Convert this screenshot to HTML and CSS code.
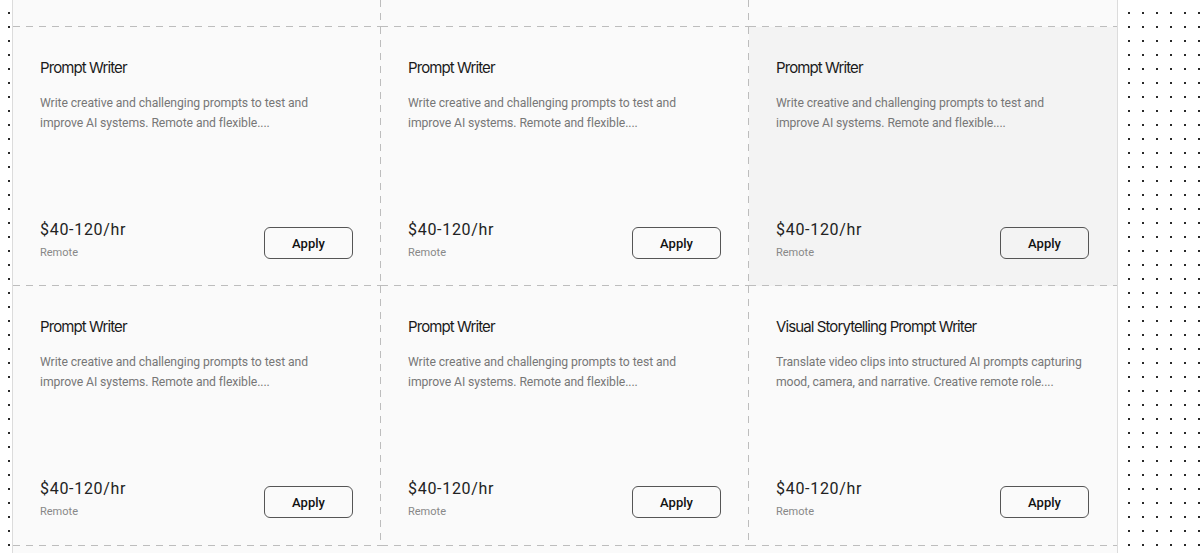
FILE: index.html
```html
<!DOCTYPE html>
<html lang="en">
<head>
<meta charset="utf-8">
<title>Jobs</title>
<link rel="stylesheet" href="styles.css">
</head>
<body>
<div class="board">
  <div class="grid stub">
    <div class="cell"></div>
    <div class="cell"></div>
    <div class="cell"></div>
  </div>
  <div class="grid">
    <div class="cell card">
      <h3 class="title">Prompt Writer</h3>
      <p class="desc">Write creative and challenging prompts to test and improve AI systems. Remote and flexible....</p>
      <div class="foot">
        <div class="meta"><div class="price">$40-120/hr</div><div class="loc">Remote</div></div>
        <button class="apply">Apply</button>
      </div>
    </div>
    <div class="cell card">
      <h3 class="title">Prompt Writer</h3>
      <p class="desc">Write creative and challenging prompts to test and improve AI systems. Remote and flexible....</p>
      <div class="foot">
        <div class="meta"><div class="price">$40-120/hr</div><div class="loc">Remote</div></div>
        <button class="apply">Apply</button>
      </div>
    </div>
    <div class="cell card hovered">
      <h3 class="title">Prompt Writer</h3>
      <p class="desc">Write creative and challenging prompts to test and improve AI systems. Remote and flexible....</p>
      <div class="foot">
        <div class="meta"><div class="price">$40-120/hr</div><div class="loc">Remote</div></div>
        <button class="apply">Apply</button>
      </div>
    </div>
    <div class="cell card">
      <h3 class="title">Prompt Writer</h3>
      <p class="desc">Write creative and challenging prompts to test and improve AI systems. Remote and flexible....</p>
      <div class="foot">
        <div class="meta"><div class="price">$40-120/hr</div><div class="loc">Remote</div></div>
        <button class="apply">Apply</button>
      </div>
    </div>
    <div class="cell card">
      <h3 class="title">Prompt Writer</h3>
      <p class="desc">Write creative and challenging prompts to test and improve AI systems. Remote and flexible....</p>
      <div class="foot">
        <div class="meta"><div class="price">$40-120/hr</div><div class="loc">Remote</div></div>
        <button class="apply">Apply</button>
      </div>
    </div>
    <div class="cell card">
      <h3 class="title">Visual Storytelling Prompt Writer</h3>
      <p class="desc">Translate video clips into structured AI prompts capturing mood, camera, and narrative. Creative remote role....</p>
      <div class="foot">
        <div class="meta"><div class="price">$40-120/hr</div><div class="loc">Remote</div></div>
        <button class="apply">Apply</button>
      </div>
    </div>
  </div>
</div>
</body>
</html>
```

FILE: styles.css
```css
html, body {
  margin: 0;
  padding: 0;
}
body {
  width: 1200px;
  height: 553px;
  overflow: hidden;
  background-color: #ffffff;
  background-image: radial-gradient(circle at 7px 7px, #2a2a2a 0.9px, transparent 1.3px);
  background-size: 14px 14px;
  background-position: 2px 6px;
  font-family: Roboto, "Liberation Sans", sans-serif;
}
.board {
  margin-left: 12px;
  width: 1104px;
  height: 553px;
  border-left: 1px solid #dcdcdc;
  border-right: 1px solid #dcdcdc;
  background: #fafafa;
  overflow: hidden;
}
.grid {
  display: grid;
  grid-template-columns: repeat(3, 1fr);
}
.cell {
  box-sizing: border-box;
  background-image:
    repeating-linear-gradient(to right, #bdbdbd 0 7px, transparent 7px 13px),
    repeating-linear-gradient(to bottom, #bdbdbd 0 7px, transparent 7px 13px);
  background-size: 100% 1px, 1px 100%;
  background-position: left bottom, right top;
  background-repeat: no-repeat;
}
.grid > .cell:nth-child(3n) {
  background-image:
    repeating-linear-gradient(to right, #bdbdbd 0 7px, transparent 7px 13px);
  background-size: 100% 1px;
  background-position: left bottom;
}
.stub .cell {
  height: 27px;
}
.card {
  height: 259px;
  padding: 31px 28px 27px 27px;
  display: flex;
  flex-direction: column;
  background-color: #fafafa;
}
.card:nth-child(n+4) {
  height: 260px;
  padding-bottom: 28px;
}
.card.hovered {
  background-color: #f3f3f3;
}
.title {
  margin: 0;
  font-family: Inter, "Liberation Sans", sans-serif;
  font-weight: 400;
  font-size: 15px;
  line-height: 20px;
  letter-spacing: -0.9px;
  color: #1a1a1a;
}
.desc {
  margin: 15px 0 0;
  font-size: 12.2px;
  line-height: 20px;
  color: #777777;
  letter-spacing: -0.08px;
}
.foot {
  margin-top: auto;
  display: flex;
  justify-content: space-between;
  align-items: flex-end;
}
.meta {
  display: flex;
  flex-direction: column;
  gap: 5px;
  margin-bottom: -1px;
}
.price {
  font-size: 16px;
  line-height: 22px;
  letter-spacing: 0.7px;
  color: #222222;
}
.loc {
  font-size: 11px;
  line-height: 14px;
  color: #888888;
}
.apply {
  width: 89px;
  height: 32px;
  border: 1px solid #555555;
  border-radius: 6px;
  background: transparent;
  font-family: Roboto, "Liberation Sans", sans-serif;
  font-size: 13px;
  font-weight: 500;
  color: #111111;
  padding: 0;
}
```
